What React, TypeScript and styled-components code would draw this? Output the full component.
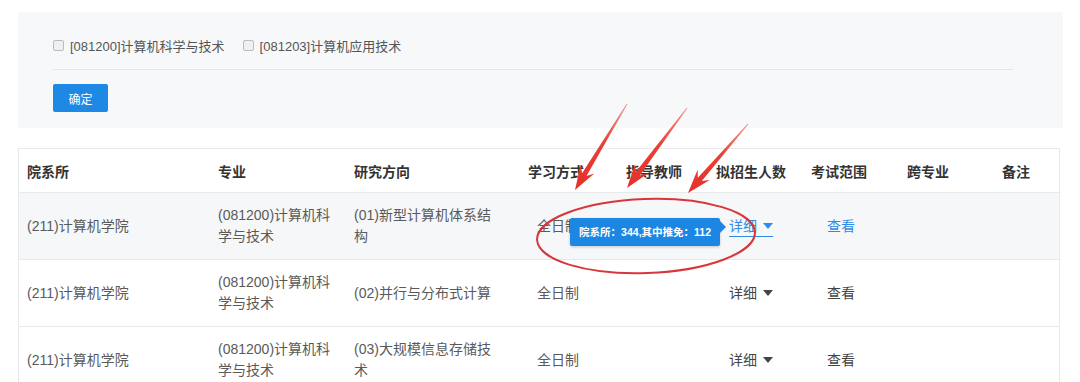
import React from "react";
import styled, { createGlobalStyle } from "styled-components";

const GlobalStyle = createGlobalStyle`
  html, body {
    margin: 0;
    padding: 0;
    background: #fff;
  }
  body {
    font-family: "Liberation Sans", "Noto Sans CJK SC", sans-serif;
    color: #555;
  }
`;

const columns = [192, 136, 174, 98, 90, 95, 96, 95, 66];
const headers = ["院系所", "专业", "研究方向", "学习方式", "指导教师", "拟招生人数", "考试范围", "跨专业", "备注"];

interface Plan {
  dept: string;
  major: string;
  direction: string;
  mode: string;
  active?: boolean;
}

const plans: Plan[] = [
  { dept: "(211)计算机学院", major: "(081200)计算机科学与技术", direction: "(01)新型计算机体系结构", mode: "全日制", active: true },
  { dept: "(211)计算机学院", major: "(081200)计算机科学与技术", direction: "(02)并行与分布式计算", mode: "全日制" },
  { dept: "(211)计算机学院", major: "(081200)计算机科学与技术", direction: "(03)大规模信息存储技术", mode: "全日制" },
];

// red annotation arrows, tail -> tip
const arrows = [
  { from: [627, 104], to: [575, 190] },
  { from: [687, 108], to: [627, 188] },
  { from: [748, 124], to: [688, 193] },
];

function arrowPoints(x1: number, y1: number, x2: number, y2: number) {
  const dx = x2 - x1;
  const dy = y2 - y1;
  const len = Math.hypot(dx, dy);
  const ux = dx / len;
  const uy = dy / len;
  const nx = -uy;
  const ny = ux;
  const headLen = 24;
  const bx = x2 - ux * headLen;
  const by = y2 - uy * headLen;
  const kx = x2 - ux * (headLen - 6);
  const ky = y2 - uy * (headLen - 6);
  const pts = [
    [x1 + nx * 0.5, y1 + ny * 0.5],
    [kx + nx * 2.6, ky + ny * 2.6],
    [bx + nx * 8, by + ny * 8],
    [x2, y2],
    [bx - nx * 8, by - ny * 8],
    [kx - nx * 2.6, ky - ny * 2.6],
    [x1 - nx * 0.5, y1 - ny * 0.5],
  ];
  return pts.map((p) => p.map((v) => v.toFixed(1)).join(",")).join(" ");
}

const App: React.FC = () => {
  return (
    <Page>
      <GlobalStyle />
      <FilterPanel>
        <CheckRow>
          <CheckLabel>
            <CheckBox type="checkbox" />
            [081200]计算机科学与技术
          </CheckLabel>
          <CheckLabel>
            <CheckBox type="checkbox" />
            [081203]计算机应用技术
          </CheckLabel>
        </CheckRow>
        <Divider />
        <ConfirmButton>确定</ConfirmButton>
      </FilterPanel>

      <Table>
        <HeadRow>
          {headers.map((h) => (
            <HeadCell key={h}>{h}</HeadCell>
          ))}
        </HeadRow>
        {plans.map((p, i) => (
          <Row key={i} $active={p.active}>
            <Cell>{p.dept}</Cell>
            <Cell>
              <Wrap $max={123}>{p.major}</Wrap>
            </Cell>
            <Cell>
              <Wrap $max={145}>{p.direction}</Wrap>
            </Cell>
            <Cell $indent={17}>{p.mode}</Cell>
            <Cell />
            <Cell $indent={21}>
              <DetailLink $active={p.active}>
                详细
                <Caret />
                {p.active && <Tip>院系所：344,其中推免：112</Tip>}
              </DetailLink>
            </Cell>
            <Cell $indent={24}>
              <ViewLink $active={p.active}>查看</ViewLink>
            </Cell>
            <Cell />
            <Cell />
          </Row>
        ))}
      </Table>

      <Annotation width="1080" height="382" viewBox="0 0 1080 382">
        <defs>
          <linearGradient id="arrowFade" x1="0" y1="0" x2="0" y2="1">
            <stop offset="0" stopColor="#f29a94" />
            <stop offset="0.45" stopColor="#ea3f36" />
            <stop offset="1" stopColor="#e5302a" />
          </linearGradient>
        </defs>
        <ellipse
          cx="646"
          cy="236"
          rx="109"
          ry="37"
          transform="rotate(-2 646 236)"
          fill="none"
          stroke="#d8363a"
          strokeWidth="2"
        />
        {arrows.map((a, i) => (
          <polygon
            key={i}
            points={arrowPoints(a.from[0], a.from[1], a.to[0], a.to[1])}
            fill="url(#arrowFade)"
          />
        ))}
      </Annotation>
    </Page>
  );
};

export default App;

const Page = styled.div`
  position: relative;
  width: 1080px;
  height: 382px;
  overflow: hidden;
  padding: 12px 0 0 18px;
  box-sizing: border-box;
`;

const FilterPanel = styled.div`
  width: 1045px;
  height: 116px;
  background: #f7f8fa;
  padding: 23px 50px 0 35px;
  box-sizing: border-box;
`;

const CheckRow = styled.div`
  display: flex;
  align-items: center;
  gap: 18px;
  height: 20px;
`;

const CheckLabel = styled.label`
  display: flex;
  align-items: center;
  gap: 6px;
  font-size: 13px;
  color: #555;
  white-space: nowrap;
`;

const CheckBox = styled.input`
  appearance: none;
  margin: 0;
  width: 11px;
  height: 11px;
  border: 1px solid #b9bcc0;
  border-radius: 2px;
  background: #eff0f2;
  box-sizing: border-box;
`;

const Divider = styled.div`
  margin-top: 14px;
  border-top: 1px solid #e4e6ea;
`;

const ConfirmButton = styled.button`
  display: block;
  margin-top: 14px;
  width: 55px;
  height: 28px;
  border: none;
  border-radius: 2px;
  background: #1e88e5;
  color: #fff;
  font-family: inherit;
  font-size: 12px;
  padding: 0;
`;

const Table = styled.div`
  margin-top: 20px;
  width: 1042px;
  border: 1px solid #e8e9eb;
  border-bottom: none;
  box-sizing: border-box;
`;

const HeadRow = styled.div`
  display: grid;
  grid-template-columns: ${columns.map((c, i) => (i === 0 ? c - 1 : i === columns.length - 1 ? c - 1 : c) + "px").join(" ")};
  height: 43px;
  border-bottom: 1px solid #e8e9eb;
`;

const HeadCell = styled.div`
  display: flex;
  align-items: center;
  padding-left: 8px;
  font-size: 14px;
  font-weight: 700;
  color: #333;
`;

const Row = styled.div<{ $active?: boolean }>`
  display: grid;
  grid-template-columns: ${columns.map((c, i) => (i === 0 ? c - 1 : i === columns.length - 1 ? c - 1 : c) + "px").join(" ")};
  height: 66px;
  border-bottom: 1px solid #e8e9eb;
  background: ${(p) => (p.$active ? "#f5f7f9" : "#fff")};
`;

const Cell = styled.div<{ $indent?: number }>`
  display: flex;
  align-items: center;
  padding-left: ${(p) => (p.$indent ?? 8)}px;
  font-size: 14px;
  line-height: 21px;
  color: #5a5a5a;
`;

const Wrap = styled.span<{ $max: number }>`
  max-width: ${(p) => p.$max}px;
`;

const DetailLink = styled.span<{ $active?: boolean }>`
  position: relative;
  display: inline-flex;
  align-items: center;
  line-height: 20px;
  color: ${(p) => (p.$active ? "#2f8be6" : "#444")};
  border-bottom: 1px solid ${(p) => (p.$active ? "#2f8be6" : "transparent")};
`;

const Caret = styled.span`
  display: inline-block;
  margin-left: 6px;
  width: 0;
  height: 0;
  border-left: 5px solid transparent;
  border-right: 5px solid transparent;
  border-top: 6px solid currentColor;
`;

const ViewLink = styled.span<{ $active?: boolean }>`
  color: ${(p) => (p.$active ? "#2f8be6" : "#444")};
`;

const Tip = styled.div`
  position: absolute;
  right: calc(100% + 9px);
  top: 2px;
  height: 28px;
  padding: 0 9px;
  display: flex;
  align-items: center;
  white-space: nowrap;
  background: #1c86e2;
  color: #fff;
  font-size: 10.5px;
  font-weight: 700;
  border-radius: 2px;
  box-shadow: 0 1px 3px rgba(0, 0, 0, 0.2);

  &::after {
    content: "";
    position: absolute;
    left: 100%;
    top: 3px;
    border-top: 6px solid transparent;
    border-bottom: 6px solid transparent;
    border-left: 6px solid #1c86e2;
  }
`;

const Annotation = styled.svg`
  position: absolute;
  left: 0;
  top: 0;
  pointer-events: none;
`;
